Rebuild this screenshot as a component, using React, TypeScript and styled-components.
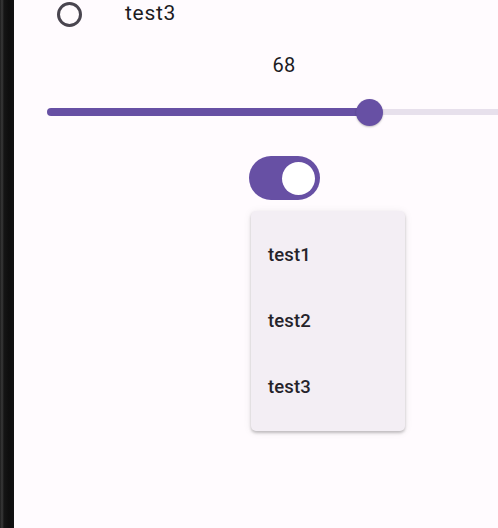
import styled, { createGlobalStyle } from "styled-components";

const GlobalStyle = createGlobalStyle`
  html, body {
    margin: 0;
    padding: 0;
    background: #fffbfe;
  }
  body {
    font-family: Roboto, "Noto Sans", sans-serif;
    color: #1c1b1f;
  }
`;

const Screen = styled.div`
  display: flex;
  width: 498px;
  height: 528px;
  overflow: hidden;
`;

const Bezel = styled.div`
  flex: 0 0 14px;
  background: linear-gradient(
    to right,
    #1c1c1c 0px,
    #3a3a3a 2px,
    #151515 4px,
    #0e0e0e 9px,
    #121212 14px
  );
`;

const Content = styled.main`
  flex: 0 0 540px;
  display: flex;
  flex-direction: column;
  background: #fffbfe;
`;

const RadioRow = styled.label`
  display: flex;
  align-items: center;
  gap: 43px;
  height: 28px;
  padding-left: 43px;
`;

const RadioCircle = styled.span<{ $checked?: boolean }>`
  box-sizing: border-box;
  width: 25px;
  height: 25px;
  border-radius: 50%;
  border: 3px solid ${({ $checked }) => ($checked ? "#6750a4" : "#49454f")};
`;

const RadioLabel = styled.span`
  font-size: 21px;
  line-height: 24px;
  letter-spacing: 0.7px;
  margin-bottom: 3px;
`;

const ValueText = styled.div`
  align-self: center;
  margin-top: 25px;
  font-size: 20px;
  line-height: 24px;
  letter-spacing: 0.3px;
`;

const SliderBox = styled.div`
  position: relative;
  margin: 21px 33px 0 33px;
  height: 28px;
  display: flex;
  align-items: center;
`;

const ActiveTrack = styled.div`
  height: 8px;
  border-radius: 4px;
  background: #6750a4;
`;

const InactiveTrack = styled.div`
  flex: 1;
  height: 6px;
  background: #e7e0ec;
`;

const Thumb = styled.div`
  position: absolute;
  top: 0.5px;
  width: 27px;
  height: 27px;
  margin-left: -13.5px;
  border-radius: 50%;
  background: #6750a4;
  box-shadow: 0 1px 2px rgba(0, 0, 0, 0.25);
`;

const SwitchTrack = styled.div<{ $on: boolean }>`
  align-self: center;
  box-sizing: border-box;
  display: flex;
  align-items: center;
  justify-content: ${({ $on }) => ($on ? "flex-end" : "flex-start")};
  margin-top: 30px;
  width: 71px;
  height: 44px;
  padding: 0 5px;
  border-radius: 22px;
  background: ${({ $on }) => ($on ? "#6750a4" : "#e7e0ec")};
`;

const SwitchThumb = styled.div`
  width: 33px;
  height: 33px;
  border-radius: 50%;
  background: #ffffff;
`;

const Menu = styled.ul`
  list-style: none;
  margin: 11px 0 0 237px;
  padding: 11px 0;
  width: 154px;
  border-radius: 5px;
  background: #f3eef4;
  box-shadow: 0 2px 3px rgba(0, 0, 0, 0.22), 0 1px 8px rgba(0, 0, 0, 0.08);
`;

const MenuItem = styled.li`
  display: flex;
  align-items: center;
  height: 66px;
  padding-left: 17px;
  font-size: 18.5px;
  font-weight: 500;
  letter-spacing: 0.1px;
  color: #25232a;
`;

export default function App() {
  const value = 68;
  return (
    <>
      <GlobalStyle />
      <Screen>
        <Bezel />
        <Content>
          <RadioRow>
            <RadioCircle />
            <RadioLabel>test3</RadioLabel>
          </RadioRow>
          <ValueText>{value}</ValueText>
          <SliderBox>
            <ActiveTrack style={{ width: `${value}%` }} />
            <InactiveTrack />
            <Thumb style={{ left: `${value}%` }} />
          </SliderBox>
          <SwitchTrack $on>
            <SwitchThumb />
          </SwitchTrack>
          <Menu>
            {["test1", "test2", "test3"].map((t) => (
              <MenuItem key={t}>{t}</MenuItem>
            ))}
          </Menu>
        </Content>
      </Screen>
    </>
  );
}
